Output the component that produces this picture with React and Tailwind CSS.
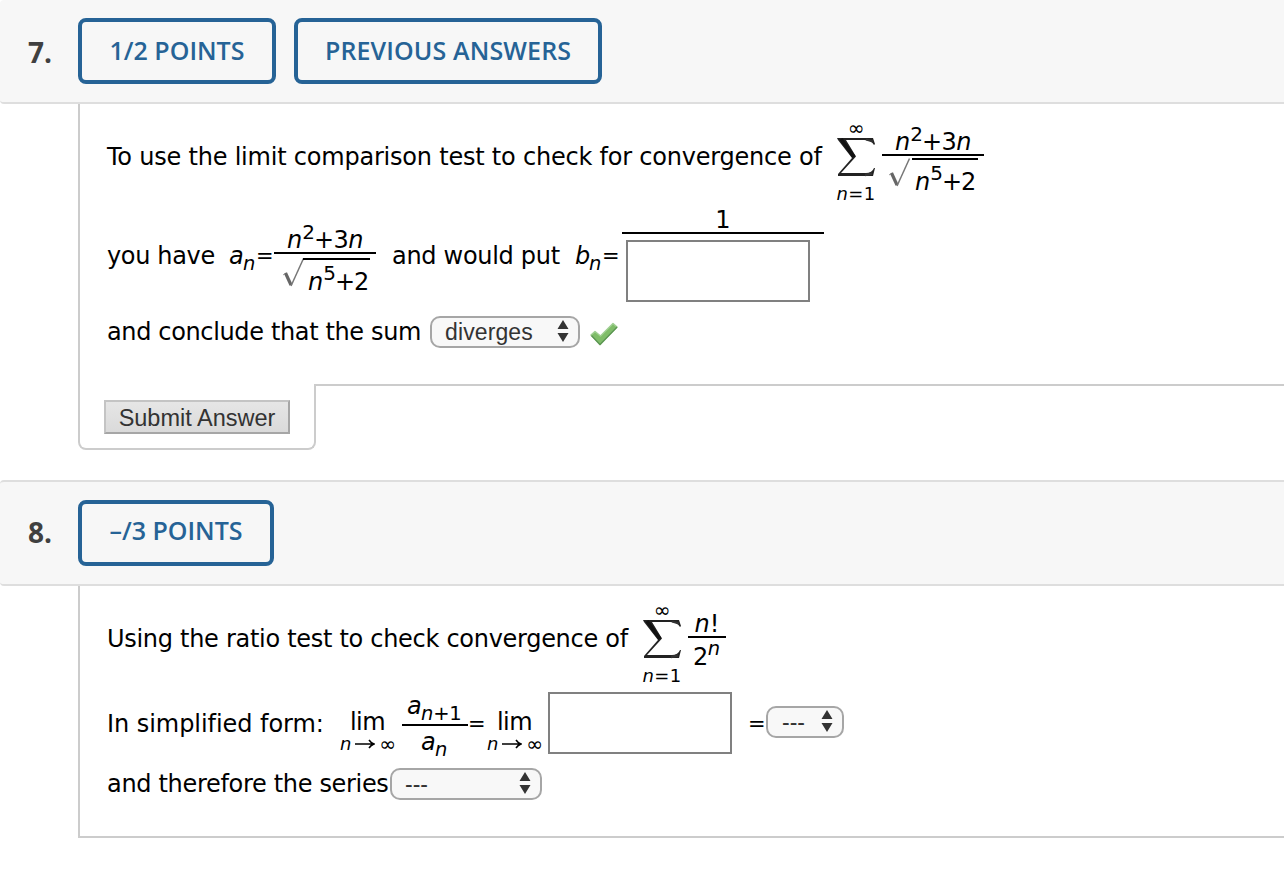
import React from "react";

function Sigma() {
  return (
    <svg width="38" height="40" viewBox="0 0 38 40" className="block">
      <path d="M0 1H36L38 7L37 8Q34 3 27 3H9L19 19.5L4 36H29Q35 36 37 31H38L36 39H1V37L15 21L1 3Z" fill="#222" />
      <path d="M4 2L17 20" stroke="#111" strokeWidth="3.6" fill="none" />
      <path d="M28 38L35 36.5" stroke="#333" strokeWidth="2.5" fill="none" />
      <path d="M29 2.5L36 4.5" stroke="#333" strokeWidth="2" fill="none" />
    </svg>
  );
}

function Radical() {
  return (
    <svg width="22" height="30" viewBox="0 0 22 30" className="block shrink-0">
      <path d="M0 17L3 15" stroke="#999" strokeWidth="1" fill="none" />
      <path d="M2.5 15L8 27" stroke="#666" strokeWidth="3.2" fill="none" />
      <path d="M8 28L20.5 0.5" stroke="#777" strokeWidth="1.5" fill="none" />
    </svg>
  );
}

function Sum({ className }) {
  return (
    <div className={"flex w-[40px] shrink-0 flex-col items-center text-[18px] leading-[18px] " + className}>
      <span className="-mt-[2px] h-[17px] text-[20px] leading-[17px]">∞</span>
      <Sigma />
      <span className="mt-[8px] whitespace-nowrap tracking-[0.3px]"><i>n</i>=1</span>
    </div>
  );
}

function RootFraction({ className, low }) {
  return (
    <div className={"flex w-[102px] shrink-0 flex-col " + className}>
      <div className="flex h-[30px] items-start pl-[13px] leading-6">
        <i className="mt-[6px]">n</i>
        <span className="mt-[-2px] text-[20px] tracking-[-1px]">2</span>
        <span className="mt-[6px] tracking-[-0.6px]">+3<i>n</i></span>
      </div>
      <div className="h-[2px] bg-black" />
      <div className={low ? "flex pl-[9px] pt-[4px]" : "flex pl-[7px] pt-[2px]"}>
        <Radical />
        <div className={low ? "-ml-[2px] flex h-[34px] w-[67px] items-start border-t-2 border-black pl-[5px] leading-6" : "ml-[1px] flex h-[34px] w-[66px] items-start border-t-2 border-black pl-[3px] leading-6"}>
          <i className="mt-[10px]">n</i>
          <span className="mt-[1px] text-[20px] tracking-[-1px]">5</span>
          <span className="mt-[10px] tracking-[-1px]">+2</span>
        </div>
      </div>
    </div>
  );
}

function Arrows() {
  return (
    <svg width="12" height="22" viewBox="0 0 12 22" className="block shrink-0" fill="#333">
      <path d="M6 0L11.5 9H0.5ZM0.5 13H11.5L6 22Z" />
    </svg>
  );
}

function Select({ className, children }) {
  return (
    <div className={"flex h-[32px] shrink-0 items-start justify-between rounded-[10px] border-2 border-[#a6a6a6] bg-[#f8f8f8] font-['Liberation_Sans',Arial,sans-serif] text-[#333] " + className}>
      {children}
      <Arrows />
    </div>
  );
}

function Lim({ className }) {
  return (
    <div className={"flex w-[56px] shrink-0 flex-col items-center " + className}>
      <span className="-ml-px leading-6 tracking-[-0.6px]">lim</span>
      <span className="mt-[1px] flex w-[56px] items-center justify-between text-[18px] leading-[18px]">
        <i>n</i>
        <svg width="20" height="10" viewBox="0 0 20 10" fill="none" stroke="black" strokeWidth="1.5" className="-ml-px"><path d="M0 5H19M14 1Q16 4 19 5Q16 6 14 9" /></svg>
        <span className="text-[20px]">∞</span>
      </span>
    </div>
  );
}

function Badge({ className, children }) {
  return (
    <div className={"flex h-[66px] items-center justify-center rounded-[8px] border-4 border-[#266396] font-['Open_Sans',sans-serif] text-[25px] font-semibold whitespace-nowrap text-[#266396] " + className}>
      {children}
    </div>
  );
}

function Num({ className, children }) {
  return <div className={"ml-[28px] w-[50px] font-['Open_Sans',sans-serif] text-[28px] font-bold text-[#404040] " + className}>{children}</div>;
}

export default function App() {
  return (
    <div className="h-[870px] w-[1284px] overflow-hidden bg-white font-['DejaVu_Sans',Verdana,sans-serif] text-[24px] text-black">
      <div className="flex h-[104px] items-center rounded-l-[4px] border-b-2 border-[#dedede] bg-[#f7f7f7]">
        <Num className="pt-px">7.</Num>
        <Badge className="w-[198px] pb-px">1/2 POINTS</Badge>
        <Badge className="ml-[18px] w-[308px] pb-px tracking-[0.13px]">PREVIOUS ANSWERS</Badge>
      </div>

      <div className="ml-[78px] h-[280px] border-l-2 border-[#ccc] pl-[27px]">
        <div className="flex h-[100px] items-start">
          <span className="mt-[41px] w-[729px] shrink-0 leading-6 tracking-[-0.215px] whitespace-nowrap">To use the limit comparison test to check for convergence of</span>
          <Sum className="mt-[18px]" />
          <RootFraction className="ml-[6px] mt-[20px]" />
        </div>
        <div className="flex h-[100px] items-start leading-6 whitespace-nowrap">
          <span className="mt-[40px] w-[122px] shrink-0 tracking-[-0.35px]">you have</span>
          <i className="mt-[40px] w-[14px] shrink-0">a</i>
          <i className="mt-[48px] w-[13px] shrink-0 text-[19.5px]">n</i>
          <span className="mt-[40px] w-[18px] shrink-0 text-[21px]">=</span>
          <RootFraction low className="mt-[18px]" />
          <span className="mt-[40px] ml-[16px] w-[183px] shrink-0 tracking-[-0.3px]">and would put</span>
          <i className="mt-[40px] w-[14px] shrink-0">b</i>
          <i className="mt-[48px] w-[13px] shrink-0 text-[19.5px]">n</i>
          <span className="mt-[40px] w-[20px] shrink-0 text-[21px]">=</span>
          <div className="mt-[4px] w-[202px] shrink-0">
            <div className="h-[26px] border-b-2 border-black text-center">1</div>
            <div className="mt-[6px] ml-[4px] h-[62px] w-[184px] border-2 border-[#808080]" />
          </div>
        </div>
        <div className="flex items-start">
          <span className="mt-[16px] w-[323px] shrink-0 leading-6 tracking-[-0.36px] whitespace-nowrap">and conclude that the sum</span>
          <Select className="mt-[12px] w-[150px] pt-[2px] pr-[9px] pl-[13px]">
            <span className="text-[23px] leading-6 tracking-[0.12px]">diverges</span>
          </Select>
          <svg width="28" height="24" viewBox="0 0 28 24" className="mt-[18px] ml-[10px]">
            <path d="M1 13L5 9.5L10.5 14L23 1.5L27 5L10 22.5Z" fill="#7fbd68" stroke="#a0cf93" strokeWidth="1.5" strokeLinejoin="round" />
            <path d="M1.5 13.5L10 22.5L27 5" fill="none" stroke="#5c9652" strokeWidth="1.5" strokeLinejoin="round" />
          </svg>
        </div>
      </div>

      <div className="ml-[78px] flex h-[96px] items-start">
        <div className="h-[66px] w-[238px] rounded-b-[8px] border-2 border-t-0 border-[#ccc] pt-[16px] pl-[24px]">
          <div className="flex h-[34px] w-[186px] items-center justify-center border-2 border-t-[#c4c4c4] border-r-[#a6a6a6] border-b-[#a6a6a6] border-l-[#c4c4c4] bg-linear-to-b from-[#e6e6e6] to-[#dadada] pt-[2px] font-['Liberation_Sans',Arial,sans-serif] text-[23.5px] leading-6 whitespace-nowrap text-[#333]">Submit Answer</div>
        </div>
        <div className="-ml-[2px] h-[2px] flex-1 bg-[#ccc]" />
      </div>

      <div className="flex h-[106px] items-center rounded-l-[4px] border-y-2 border-[#dedede] bg-[#f7f7f7]">
        <Num className="-mt-[2px]">8.</Num>
        <Badge className="w-[196px] pb-[4px]">–/3 POINTS</Badge>
      </div>

      <div className="ml-[78px] h-[252px] border-b-2 border-l-2 border-[#ccc] pl-[27px] leading-6">
        <div className="flex h-[100px] items-start">
          <span className="mt-[41px] w-[535px] shrink-0 tracking-[-0.29px] whitespace-nowrap">Using the ratio test to check convergence of</span>
          <Sum className="mt-[18px]" />
          <div className="ml-[6px] mt-[26px] w-[38px] text-center">
            <div className="h-[26px] border-b-2 border-black"><i>n</i>!</div>
            <div className="flex items-start pl-[5px]">
              <span className="mt-[7px] tracking-[-0.5px]">2</span>
              <i className="mt-[-1px] text-[19.5px]">n</i>
            </div>
          </div>
        </div>
        <div className="flex h-[70px] items-start whitespace-nowrap">
          <span className="mt-[26px] w-[233px] shrink-0 tracking-[-0.05px]">In simplified form:</span>
          <Lim className="mt-[24px]" />
          <div className="ml-[6px] mt-[8px] w-[66px] shrink-0">
            <div className="flex h-[32px] items-start border-b-2 border-black pl-[5px]">
              <i className="w-[14px]">a</i><span className="mt-[8px] text-[19.5px] tracking-[-0.2px]"><i>n</i>+1</span>
            </div>
            <div className="flex items-start pl-[19px] pt-[6px]">
              <i className="w-[14px] -mt-[2px]">a</i><i className="mt-[6px] text-[19.5px]">n</i>
            </div>
          </div>
          <span className="mt-[26px] w-[19px] shrink-0 text-[21px]">=</span>
          <Lim className="mt-[24px]" />
          <div className="ml-[5px] mt-[6px] h-[62px] w-[184px] shrink-0 border-2 border-[#808080]" />
          <span className="mt-[26px] ml-[16px] w-[18px] shrink-0 text-[21px]">=</span>
          <Select className="mt-[20px] w-[78px] pt-[2px] pr-[9px] pl-[14px]">
            <span className="text-[23px] leading-6">---</span>
          </Select>
        </div>
        <div className="flex items-start whitespace-nowrap">
          <span className="mt-[16px] w-[283px] shrink-0 tracking-[-0.32px]">and therefore the series</span>
          <Select className="mt-[12px] w-[152px] pt-[2px] pr-[9px] pl-[13px]">
            <span className="text-[23px] leading-6">---</span>
          </Select>
        </div>
      </div>
    </div>
  );
}
